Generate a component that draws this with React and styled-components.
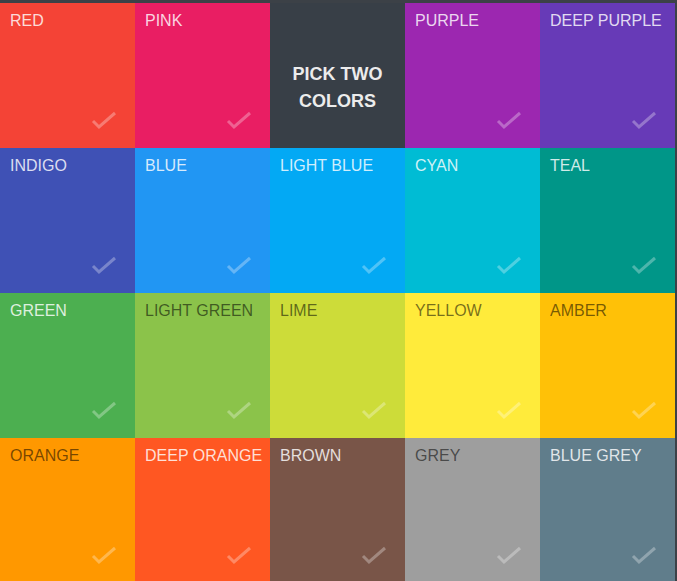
import React from "react";
import styled, { createGlobalStyle } from "styled-components";

const colors = [
  { name: "Red", hex: "#f44336" },
  { name: "Pink", hex: "#e91e63" },
  { title: true },
  { name: "Purple", hex: "#9c27b0" },
  { name: "Deep Purple", hex: "#673ab7" },
  { name: "Indigo", hex: "#3f51b5" },
  { name: "Blue", hex: "#2196f3" },
  { name: "Light Blue", hex: "#03a9f4" },
  { name: "Cyan", hex: "#00bcd4" },
  { name: "Teal", hex: "#009688" },
  { name: "Green", hex: "#4caf50" },
  { name: "Light Green", hex: "#8bc34a", dark: true },
  { name: "Lime", hex: "#cddc39", dark: true },
  { name: "Yellow", hex: "#ffeb3b", dark: true },
  { name: "Amber", hex: "#ffc107", dark: true },
  { name: "Orange", hex: "#ff9800", dark: true },
  { name: "Deep Orange", hex: "#ff5722" },
  { name: "Brown", hex: "#795548" },
  { name: "Grey", hex: "#9e9e9e", dark: true },
  { name: "Blue Grey", hex: "#607d8b" },
];

export default function App() {
  return (
    <>
      <Global />
      <Grid>
        {colors.map((c, i) =>
          c.title ? (
            <TitleTile key={i}>
              Pick two
              <br />
              colors
            </TitleTile>
          ) : (
            <Tile key={i} $bg={c.hex} $dark={c.dark}>
              <Label>{c.name}</Label>
              <Check viewBox="0 0 26 20">
                <path d="M2 10 L8 16 L24 2" />
              </Check>
            </Tile>
          )
        )}
      </Grid>
    </>
  );
}

const Global = createGlobalStyle`
  html, body {
    margin: 0;
    background: #3c4147;
  }
  body {
    padding-top: 3px;
    font-family: "Liberation Sans", Arial, sans-serif;
  }
`;

const Grid = styled.div`
  display: grid;
  grid-template-columns: repeat(5, 135px);
  grid-auto-rows: 145px;
`;

const Tile = styled.div`
  position: relative;
  background: ${(p) => p.$bg};
  color: ${(p) => (p.$dark ? "rgba(0,0,0,0.55)" : "rgba(255,255,255,0.82)")};
  padding: 10px 10px;
  box-sizing: border-box;
`;

const Label = styled.div`
  font-size: 16px;
  line-height: 16px;
  text-transform: uppercase;
  white-space: nowrap;
`;

const Check = styled.svg`
  position: absolute;
  left: 91px;
  top: 108px;
  width: 26px;
  height: 20px;
  fill: none;
  stroke: rgba(255, 255, 255, 0.3);
  stroke-width: 3;
`;

const TitleTile = styled.div`
  background: #383f47;
  color: #ececec;
  font-weight: bold;
  font-size: 18px;
  line-height: 27px;
  text-transform: uppercase;
  text-align: center;
  display: flex;
  align-items: center;
  justify-content: center;
  padding-top: 24px;
  box-sizing: border-box;
`;
